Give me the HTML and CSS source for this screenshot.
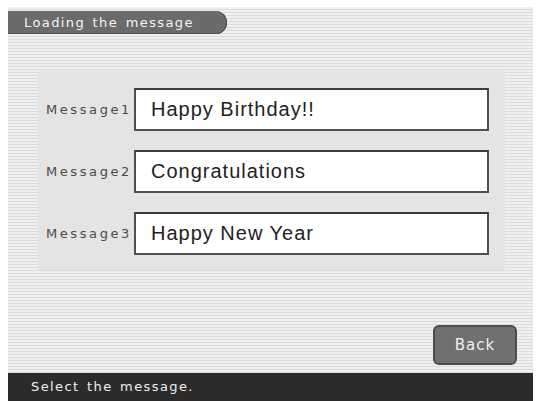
FILE: index.html
```html
<!DOCTYPE html>
<html lang="en">
<head>
    <meta charset="UTF-8">
    <meta name="viewport" content="width=device-width, initial-scale=1.0">
    <title>Loading the message</title>
    <link rel="stylesheet" href="styles.css">
</head>
<body>
    <div class="screen">
        <div class="title-bar">Loading the message</div>

        <div class="panel">
            <div class="row">
                <span class="label">Message1</span>
                <div class="field">Happy Birthday!!</div>
            </div>
            <div class="row">
                <span class="label">Message2</span>
                <div class="field">Congratulations</div>
            </div>
            <div class="row">
                <span class="label">Message3</span>
                <div class="field">Happy New Year</div>
            </div>
        </div>

        <div class="actions">
            <button class="back-btn">Back</button>
        </div>

        <div class="status-bar">Select the message.</div>
    </div>
</body>
</html>
```

FILE: styles.css
```css
/* Global Styles */
body {
    margin: 0;
    padding: 0;
    background: #ffffff;
    font-family: 'DejaVu Sans', sans-serif;
}

/* Device screen */
.screen {
    margin: 7px 4px 0 8px;
    height: 394px;
    display: flex;
    flex-direction: column;
    background: repeating-linear-gradient(180deg, #efefef 0 2px, #dcdcdc 2px 3px);
}

.title-bar {
    margin-top: 4px;
    width: 203px;
    height: 23px;
    padding-left: 16px;
    background: #6b6b6b;
    border-radius: 0 12px 12px 0;
    box-shadow: inset -1px 0 0 #4a4a4a, inset 0 -1px 0 #555;
    color: #f4f4f4;
    font-size: 13px;
    line-height: 23px;
    letter-spacing: 1.4px;
    word-spacing: 2px;
}

/* Message list */
.panel {
    margin: 37px 28px 0 30px;
    padding: 17px 16px 15px 0;
    background: #e4e4e4;
    display: flex;
    flex-direction: column;
    gap: 19px;
}

.row {
    display: flex;
    align-items: center;
}

.label {
    width: 94px;
    padding-right: 2px;
    text-align: right;
    color: #4a4a4a;
    font-size: 13px;
    letter-spacing: 2.6px;
}

.field {
    flex: 1;
    height: 39px;
    padding-left: 15px;
    background: #fff;
    border: 2px solid #4f4f4f;
    border-top-color: #3d3d3d;
    color: #222;
    font-family: 'Liberation Sans', Arial, sans-serif;
    font-size: 20px;
    line-height: 39px;
    letter-spacing: 1px;
}

/* Back button */
.actions {
    display: flex;
    justify-content: flex-end;
    margin-top: auto;
    padding: 0 16px 8px 0;
}

.back-btn {
    width: 84px;
    height: 40px;
    background: #707070;
    border: 2px solid #4c4c4c;
    border-radius: 6px;
    color: #efefef;
    font-family: 'DejaVu Sans', sans-serif;
    font-size: 15px;
    letter-spacing: 1px;
}

/* Status bar */
.status-bar {
    height: 28px;
    padding-left: 23px;
    background: #2b2b2b;
    color: #f0f0f0;
    font-size: 13px;
    line-height: 28px;
    letter-spacing: 1.4px;
    word-spacing: 2px;
}
```
